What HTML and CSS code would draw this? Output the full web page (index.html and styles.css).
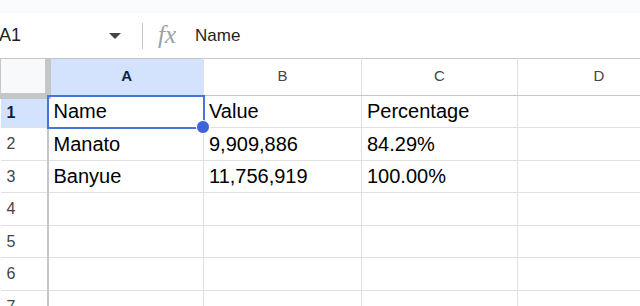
FILE: index.html
```html
<!DOCTYPE html>
<html>

<head>
    <link rel="stylesheet" href="styles.css">
</head>

<body>
    <div class="topbar"></div>
    <div class="formula-bar">
        <div class="name-box">
            <span class="cell-ref">A1</span>
            <span class="caret"></span>
        </div>
        <div class="divider"></div>
        <span class="fx">fx</span>
        <span class="formula">Name</span>
    </div>
    <table class="grid">
        <colgroup>
            <col class="c-row">
            <col class="c-a">
            <col class="c-b">
            <col class="c-c">
            <col class="c-d">
        </colgroup>
        <tr class="col-heads">
            <th class="corner"></th>
            <th class="active">A</th>
            <th>B</th>
            <th>C</th>
            <th>D</th>
        </tr>
        <tr>
            <th class="row-head active">1</th>
            <td class="selected">Name<span class="handle"></span></td>
            <td>Value</td>
            <td>Percentage</td>
            <td></td>
        </tr>
        <tr>
            <th class="row-head">2</th>
            <td>Manato</td>
            <td>9,909,886</td>
            <td>84.29%</td>
            <td></td>
        </tr>
        <tr>
            <th class="row-head">3</th>
            <td>Banyue</td>
            <td>11,756,919</td>
            <td>100.00%</td>
            <td></td>
        </tr>
        <tr>
            <th class="row-head">4</th>
            <td></td><td></td><td></td><td></td>
        </tr>
        <tr>
            <th class="row-head">5</th>
            <td></td><td></td><td></td><td></td>
        </tr>
        <tr>
            <th class="row-head">6</th>
            <td></td><td></td><td></td><td></td>
        </tr>
        <tr>
            <th class="row-head">7</th>
            <td></td><td></td><td></td><td></td>
        </tr>
    </table>
</body>

</html>
```

FILE: styles.css
```css
body {
    margin: 0;
    background-color: #fff;
    font-family: "Liberation Sans", Arial, sans-serif;
    overflow: hidden;
}

.topbar {
    height: 13px;
    background-color: #f9fbfd;
}

.formula-bar {
    height: 45px;
    display: flex;
    align-items: center;
    background-color: #fff;
}

.name-box {
    width: 121px;
    display: flex;
    align-items: center;
    justify-content: space-between;
}

.cell-ref {
    font-family: "Liberation Sans", Arial, sans-serif;
    font-size: 18px;
    color: #1f1f1f;
    margin-left: -1px;
}

.caret {
    width: 0;
    height: 0;
    border-left: 6px solid transparent;
    border-right: 6px solid transparent;
    border-top: 6px solid #444;
}

.divider {
    width: 1px;
    height: 26px;
    background-color: #c7c7c7;
    margin-left: 21px;
}

.fx {
    font-family: "Liberation Serif", serif;
    font-style: italic;
    font-size: 25px;
    color: #9aa0a6;
    margin-left: 15px;
    margin-top: -2px;
}

.formula {
    font-family: "Liberation Sans", Arial, sans-serif;
    font-size: 17px;
    color: #1f1f1f;
    margin-left: 19px;
}

.grid {
    border-collapse: collapse;
    table-layout: fixed;
    width: 680px;
}

.c-row { width: 47px; }
.c-a { width: 156px; }
.c-b { width: 158px; }
.c-c { width: 156px; }
.c-d { width: 163px; }

.grid th,
.grid td {
    border: 1px solid #e1e1e1;
    padding: 0;
    overflow: visible;
    white-space: nowrap;
}

.col-heads th {
    height: 32px;
    padding-bottom: 4px;
    border-top: 1px solid #c4c7c5;
    border-bottom: 1px solid #c4c7c5;
    border-left: 1px solid #c4c7c5;
    font-family: "Liberation Sans", Arial, sans-serif;
    font-weight: normal;
    font-size: 15px;
    color: #444;
    text-align: center;
}

.col-heads th.active {
    background-color: #d3e3fd;
    color: #0b1f44;
    font-weight: bold;
}

.col-heads th.corner {
    background-color: #f8f9fa;
    border-right: 6px solid #c4c6c8;
    border-bottom: 6px solid #c4c6c8;
    height: 30px;
    padding-bottom: 0;
}

.row-head {
    border-right: 2px solid #c4c7c5 !important;
    border-left: none !important;
    font-family: "Liberation Sans", Arial, sans-serif;
    font-weight: normal;
    font-size: 16px;
    color: #444;
    text-align: left;
    padding-left: 6px !important;
    background-color: #fff;
}

.row-head.active {
    background-color: #d3e3fd;
    color: #0b1f44;
    font-weight: bold;
}

.grid td {
    height: 31px;
    font-size: 20px;
    color: #000;
    padding-left: 5px;
    vertical-align: middle;
}

.grid tr:nth-child(odd) td {
    height: 32px;
}

.grid td.selected {
    position: relative;
    outline: 2px solid #4a72d8;
    outline-offset: -1px;
}

.handle {
    position: absolute;
    right: -7px;
    bottom: -7px;
    width: 12px;
    height: 12px;
    border-radius: 50%;
    background-color: #3d64d6;
    border: 1px solid #fff;
    z-index: 2;
}
```
